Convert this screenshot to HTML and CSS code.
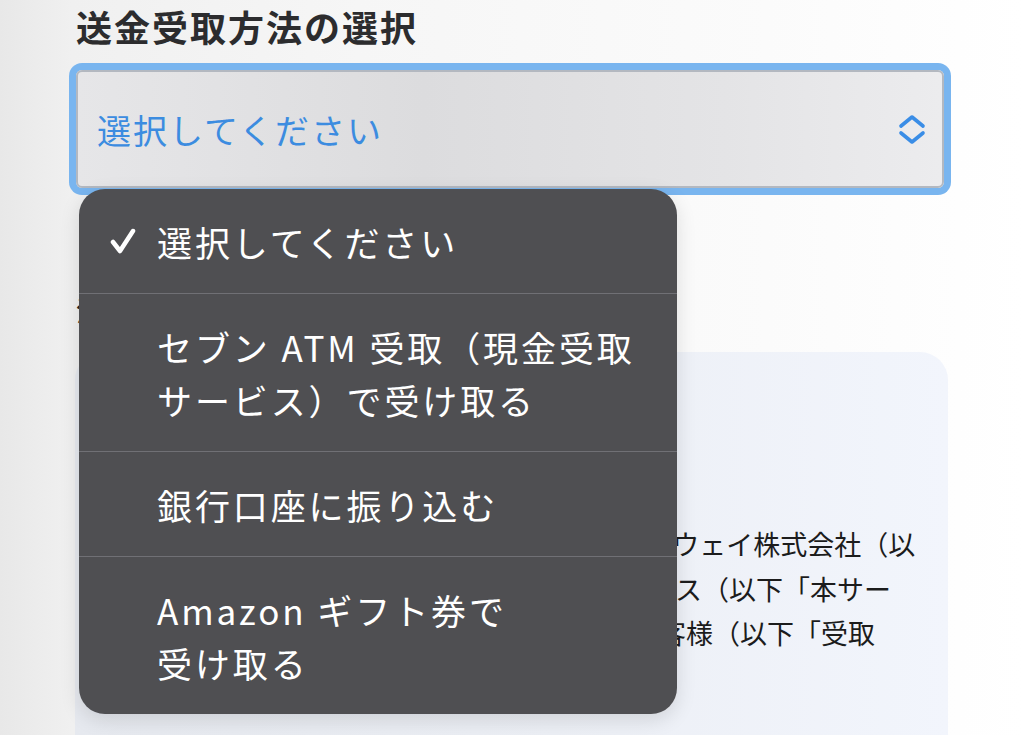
FILE: index.html
```html
<!DOCTYPE html>
<html lang="ja">
<head>
    <meta charset="UTF-8">
    <meta name="viewport" content="width=device-width, initial-scale=1.0">
    <title>送金受取方法の選択</title>
    <link rel="stylesheet" href="styles.css">
</head>
<body>
    <div class="page">
        <h2>送金受取方法の選択</h2>

        <div class="field">
            <div class="select" role="button" aria-haspopup="listbox">
                <span class="placeholder">選択してください</span>
                <svg class="chevron" width="28" height="31" viewBox="0 0 28 31">
                    <path d="M3 12 L14 3 L25 12" />
                    <path d="M3 19 L14 28 L25 19" />
                </svg>
            </div>

            <ul class="menu" role="listbox">
                <li class="option selected">
                    <svg class="check" width="26" height="28" viewBox="0 0 26 28">
                        <path d="M3 15 L10 24 L23 4" />
                    </svg>
                    <span>選択してください</span>
                </li>
                <li class="option"><span>セブン ATM 受取（現金受取<br>サービス）で受け取る</span></li>
                <li class="option"><span>銀行口座に振り込む</span></li>
                <li class="option"><span>Amazon ギフト券で<br>受け取る</span></li>
            </ul>
        </div>

        <h3>注意事項</h3>

        <div class="terms">
            <h4>送金受取サービス利用規約</h4>
            <p class="terms-date">2023年4月1日制定</p>
            <p class="terms-text">
                この利用規約は、リンクスペイメント・ゲートウェイ株式会社（以<br>
                下「当社」という）が提供する送金受取サービス（以下「本サー<br>
                ビス」という。）を利用して送金を受け取るお客様（以下「受取<br>
                人」という）に適用されます。
            </p>
        </div>
    </div>
</body>
</html>
```

FILE: styles.css
```css
body {
    margin: 0;
    font-family: "Noto Sans CJK JP", "Noto Sans", sans-serif;
    background: linear-gradient(to right, #e8e8e8 0%, #f0f0f0 7%, #f6f6f6 35%, #fbfbfb 75%, #ffffff 100%);
    height: 735px;
    overflow: hidden;
}
.page {
    padding: 4px 0 0 76px;
    width: 870px;
}
h2 {
    margin: 0;
    font-size: 36px;
    line-height: 44px;
    letter-spacing: 2px;
    font-weight: 700;
    color: #2c2c2e;
}
.field {
    position: relative;
    margin-top: 22px;
}
.select {
    display: flex;
    align-items: center;
    justify-content: space-between;
    padding: 0 16px 0 19px;
    box-sizing: border-box;
    width: 868px;
    height: 118px;
    border: 2px solid #b3b8c0;
    border-radius: 6px;
    background: linear-gradient(to right, #e6e6e8 0%, #dcdcde 40%, #e4e4e6 75%, #ececee 100%);
    box-shadow: 0 0 0 7px #79b5ef;
}
.placeholder {
    font-size: 34px;
    letter-spacing: 2px;
    color: #3c8ce0;
}
.chevron path {
    fill: none;
    stroke: #3a8de6;
    stroke-width: 3.6;
    stroke-linecap: round;
    stroke-linejoin: round;
}
.menu {
    position: absolute;
    top: 119px;
    left: 3px;
    width: 598px;
    margin: 0;
    padding: 0;
    list-style: none;
    background-color: #4f4f52;
    border-radius: 26px;
    overflow: hidden;
    box-shadow: 0 6px 20px rgba(0, 0, 0, 0.12);
    z-index: 2;
}
.option {
    display: flex;
    align-items: center;
    padding: 26px 0 25px 78px;
    border-top: 1px solid #707075;
    font-size: 35px;
    line-height: 53px;
    letter-spacing: 2.9px;
    color: #ffffff;
}
.option:first-child {
    border-top: none;
}
.option.selected {
    position: relative;
}
.check {
    position: absolute;
    left: 31px;
    top: 38px;
}
.check path {
    fill: none;
    stroke: #ffffff;
    stroke-width: 4.5;
    stroke-linecap: round;
    stroke-linejoin: round;
}
h3 {
    margin: 100px 0 0 0;
    font-size: 28px;
    line-height: 44px;
    font-weight: 700;
    color: #222;
}
.terms {
    margin-top: 20px;
    margin-left: -1px;
    width: 873px;
    height: 383px;
    box-sizing: border-box;
    padding: 40px 30px 0 33px;
    border-radius: 28px 28px 0 0;
    background: linear-gradient(to right, #e6e9ef 0%, #eceff5 55%, #f2f5fc 100%);
}
h4 {
    margin: 0;
    font-size: 28px;
    line-height: 40px;
    color: #222;
}
.terms-date {
    margin: 16px 0 0 0;
    font-size: 22px;
    line-height: 32px;
    color: #444;
}
.terms-text {
    margin: 44px 0 0 0;
    font-family: "Liberation Serif", "Noto Sans CJK JP", serif;
    font-size: 27px;
    line-height: 44.5px;
    font-weight: 400;
    color: #1c1c1c;
}
```
